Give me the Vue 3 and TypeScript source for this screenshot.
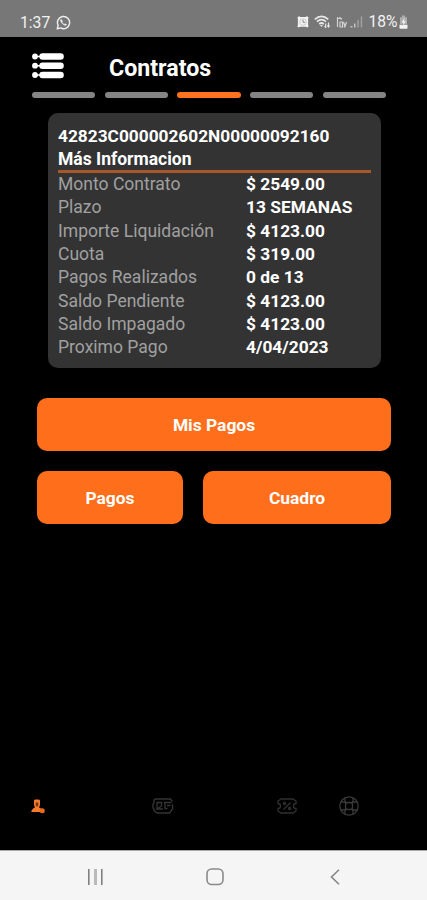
<script setup lang="ts">
interface Detail {
  label: string
  value: string
}

const details: Detail[] = [
  { label: 'Monto Contrato', value: '$ 2549.00' },
  { label: 'Plazo', value: '13 SEMANAS' },
  { label: 'Importe Liquidación', value: '$ 4123.00' },
  { label: 'Cuota', value: '$ 319.00' },
  { label: 'Pagos Realizados', value: '0 de 13' },
  { label: 'Saldo Pendiente', value: '$ 4123.00' },
  { label: 'Saldo Impagado', value: '$ 4123.00' },
  { label: 'Proximo Pago', value: '4/04/2023' },
]
const steps = 5
const activeStep = 3
</script>

<template>
  <div class="screen">
    <header class="status">
      <div class="status-left">
        <span class="time">1:37</span>
        <svg class="whatsapp" viewBox="0 0 16 16" width="15" height="15" fill="none" stroke="#f0f0f0">
          <path d="M1.3 14.7l1-3.6A6.5 6.5 0 1 1 5 13.8z" stroke-width="1.5" stroke-linejoin="round" />
          <path d="M5.4 4.5c-1 .9-.5 2.7 1.3 4.6s3.700 2.500 4.600 1.400l-1.700-1.200-.9.7c-1-.4-2-1.400-2.500-2.500l.7-.9z" fill="#f0f0f0" stroke-width=".6" />
        </svg>
      </div>
      <div class="status-right">
        <svg class="alarm" viewBox="0 0 12 12" width="12" height="12">
          <path d="M.5 1.200 2 .3 3.500 1h5L10 .3l1.500.9-.4 2v5.500l.4 2-1.200.8-1.300-.8H3l-1.300.8-1.200-.8.4-2V3.200z" fill="#f3f3f3" />
          <circle cx="6" cy="6" r="3.300" fill="none" stroke="#bbb" stroke-width=".7" />
          <path d="M6 3.800V6.300h2" fill="none" stroke="#888" />
        </svg>
        <svg class="wifi" viewBox="0 0 17 14" width="17" height="14" fill="none" stroke="#e8e8e8" stroke-width="1.700">
          <path d="M.8 4.300Q7.500-1.500 14.300 4.300M3 6.700q4.500-4 9 0M5.200 9q2.300-2 4.600 0" />
          <path d="M6 10h3l-1.500 2z" fill="#e8e8e8" stroke="none" />
          <path d="M11.700 13V8.500M14.500 7.500V12M10.500 11l1.200 1.500M13.300 10.500l1.200 1.500 1.200-1.500" stroke-width="1.200" />
        </svg>
        <svg class="lte" viewBox="0 0 11 12" width="11" height="12" fill="none" stroke="#d2d2d2" stroke-width="1.200">
          <path d="M1.500 1v10M1.500 2.500H4M3.500 1.200 6 3.500M4 6h2.500v5H4zM7.500 6 9 10.500 10.500 6M8 11l2-3" />
        </svg>
        <svg class="signal" viewBox="0 0 13 12" width="13" height="12">
          <path d="M.5 10h2v1.500h-2zM4 7.500h1.500v4H4z" fill="#c4c4c4" />
          <path d="M7.300 4h1.500v7.500H7.300zM10.700.5h1.500v11h-1.500z" fill="#a0a0a0" />
        </svg>
        <span class="battery-text">18%</span>
        <svg class="battery" viewBox="0 0 9 14" width="9" height="14">
          <path d="M3 .5h3v1.700h2v7H1v-7h2z" fill="#adadad" />
          <path d="M.5 9.800h8V13q0 .7-.7.7H1.200q-.7 0-.7-.7zM5.500 3 2.500 7.500h2L3.500 11l3.500-4.700H5z" fill="#f3f3f3" />
        </svg>
      </div>
    </header>

    <main class="content">
      <div class="title-bar">
        <svg class="menu" viewBox="0 0 32 26" width="32" height="26" fill="#fff">
          <circle cx="3" cy="3.500" r="2.900" /><circle cx="3" cy="12.700" r="2.900" /><circle cx="3" cy="22" r="2.900" />
          <path d="M4 3.500h5M4 12.700h5M4 22h5" stroke="#fff" stroke-width="1.500" />
          <rect x="7.300" y=".3" width="24.500" height="6.500" rx="3.200" />
          <rect x="7.300" y="9.500" width="24.500" height="6.500" rx="3.200" />
          <rect x="7.300" y="18.800" width="24.500" height="6.500" rx="3.200" />
        </svg>
        <h1>Contratos</h1>
      </div>
      <div class="steps">
        <span v-for="step in steps" :key="step" class="step" :class="{ active: step === activeStep }"></span>
      </div>

      <section class="card">
        <p class="contract">42823C000002602N00000092160</p>
        <p class="more">Más Informacion</p>
        <div class="divider"></div>
        <dl class="details">
          <template v-for="item in details" :key="item.label">
            <dt>{{ item.label }}</dt>
            <dd>{{ item.value }}</dd>
          </template>
        </dl>
      </section>

      <div class="actions">
        <button class="wide">Mis Pagos</button>
        <button>Pagos</button>
        <button>Cuadro</button>
      </div>

      <nav class="tabs">
        <svg class="tab-user" viewBox="0 0 14 15" width="14" height="15">
          <path d="M3 1.500Q3.300.5 4.500.5h3Q8.700.5 9 1.500V6L8 8.500l2.500 1.300V13H.3q.2-3 3.700-4.500L3 6z" fill="#f47a2c" />
          <path d="M4.700 3.500h2.600v3L6 7.700 4.700 6.500z" fill="#713713" />
          <circle cx="11.300" cy="11.700" r="2.500" fill="#e9681b" />
        </svg>
        <svg class="tab-card" viewBox="0 0 22 18" width="22" height="18" fill="none" stroke="#353535" stroke-width="1.300">
          <path d="M20.500 4.500 18.500 2H4Q2 2 2 4v1.500L1 7v4l1 1v1.500L5 16h12.500l3-4V7" />
          <path d="M5 12V5.500h4.500V9L5 12h6M12 5.500h7.500M13 5.500v6h2.500M15 8.500h3.500" />
        </svg>
        <svg class="tab-ticket" viewBox="0 0 22 18" width="22" height="18" fill="none" stroke="#303030" stroke-width="1.300">
          <path d="M5 2h12l3 2v2.500q-2.500 0-2.500 2.500t2.500 2.500V14l-3 2H5l-3-2v-2.500Q4.500 11.500 4.500 9T2 6.500V4zM7.500 12.500l7-7" />
          <circle cx="8.500" cy="6.500" r="1" /><circle cx="13.500" cy="11.500" r="1" />
        </svg>
        <svg class="tab-help" viewBox="0 0 22 22" width="22" height="22" fill="none" stroke="#393939" stroke-width="1.300">
          <circle cx="11" cy="11" r="9.200" /><rect x="7.500" y="7.500" width="7" height="7" rx="2.500" />
          <path d="M7 2.800v3.500L8.500 8M15 2.800v3.500L13.500 8M7 19.200v-3.500L8.500 14M15 19.200v-3.500L13.500 14M2.800 7h3.500L8 8.500M2.800 15h3.500L8 13.500M19.200 7h-3.500L14 8.500M19.200 15h-3.500L14 13.500" />
        </svg>
      </nav>
    </main>

    <footer class="system-nav">
      <svg class="recents" viewBox="0 0 16 16" width="16" height="16">
        <path d="M0 0h1.600v16H0zM13 0h1.600v16H13z" fill="#808080" /><path d="M6 0h3v16H6z" fill="#bababa" />
      </svg>
      <svg class="home" viewBox="0 0 18 18" width="18" height="18">
        <rect x="1" y="1" width="16" height="15.500" rx="4.700" fill="none" stroke="#8a8a8a" stroke-width="1.600" />
      </svg>
      <svg class="back" viewBox="0 0 10 16" width="10" height="16">
        <path d="M9 .7 1.500 8 9 15.300" fill="none" stroke="#858585" stroke-width="1.600" />
      </svg>
    </footer>
  </div>
</template>

<style>
body {
  margin: 0;
  background: #000;
}
</style>

<style scoped>
.screen {
  display: flex;
  flex-direction: column;
  width: 427px;
  height: 900px;
  overflow: hidden;
  background: #000;
  color: #fff;
  font-family: Roboto, sans-serif;
}
.screen svg {
  display: block;
  flex: none;
}
.status {
  box-sizing: border-box;
  display: flex;
  flex: none;
  justify-content: space-between;
  height: 36.500px;
  padding: 7px 19px 0 20px;
  background: #777;
  color: #f3f3f3;
}
.status-left,
.status-right {
  display: flex;
  align-items: center;
  height: 30px;
}
.time {
  width: 36px;
  font-size: 15.700px;
}
.alarm {
  margin-right: 5px;
}
.wifi {
  margin-right: 5px;
}
.lte {
  margin-right: 3px;
}
.signal {
  margin-right: 5.500px;
}
.battery-text {
  width: 30.500px;
  font-size: 15.600px;
}
.content {
  display: flex;
  flex: 1;
  flex-direction: column;
}
.title-bar {
  display: flex;
  align-items: center;
  height: 55.500px;
  padding-left: 32px;
}
.menu {
  margin-top: 4px;
}
h1 {
  margin: 8px 0 0 45px;
  font-size: 23.200px;
  font-weight: 700;
  line-height: 28px;
}
.steps {
  display: flex;
  gap: 9.500px;
  padding-left: 32px;
}
.step {
  width: 63.200px;
  height: 6px;
  border-radius: 3px;
  background: #848484;
}
.step.active {
  background: #ff721e;
}
.card {
  box-sizing: border-box;
  width: 333px;
  height: 255px;
  margin: 15px 0 0 48px;
  padding: 12px 10px 0;
  border-radius: 10px;
  background: #333;
  font-size: 17.300px;
  line-height: 23.300px;
}
.card p {
  margin: 0;
  font-weight: 700;
}
.card .more {
  font-size: 17.500px;
}
.divider {
  height: 3px;
  margin-top: -2px;
  background: #a8572b;
}
.details {
  display: grid;
  grid-template-columns: 188px 1fr;
  margin: 0.500px 0 0;
}
dt {
  color: #a0a0a0;
  font-size: 17.550px;
}
dd {
  margin: 0;
  font-size: 17.350px;
  font-weight: 700;
}
.actions {
  display: grid;
  grid-template-columns: 146px 188px;
  gap: 20.500px 20px;
  margin: 30px 0 0 37px;
}
button {
  height: 52.500px;
  padding: 2px 0 0;
  border: 0;
  border-radius: 10px;
  background: #ff6e1b;
  color: #fff;
  font: 700 17.400px/24px Roboto, sans-serif;
}
.wide {
  grid-column: span 2;
}
.tabs {
  display: flex;
  align-items: center;
  height: 22px;
  margin: auto 0 33px 31px;
}
.tab-card {
  margin-left: 107px;
}
.tab-ticket {
  margin-left: 102px;
}
.tab-help {
  margin-left: 40px;
}
.system-nav {
  box-sizing: border-box;
  display: flex;
  flex: none;
  align-items: center;
  height: 50px;
  padding: 2px 0 0 88px;
  border-top: 1px solid #aaa;
  background: #f5f5f5;
}
.home {
  margin-left: 102px;
}
.back {
  margin-left: 106px;
}
</style>
